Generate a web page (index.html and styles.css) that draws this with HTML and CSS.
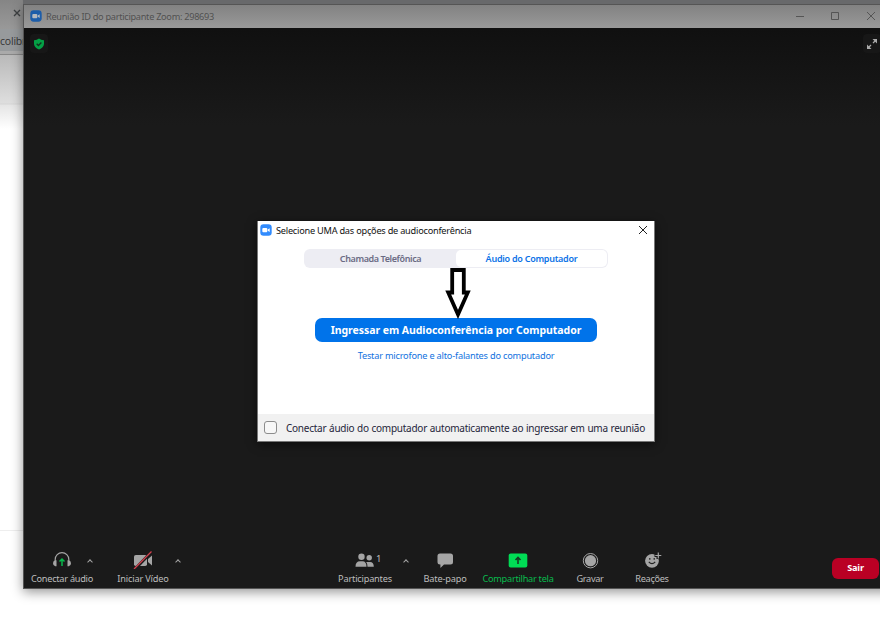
FILE: index.html
```html
<!DOCTYPE html>
<html lang="pt-BR">
<head>
<meta charset="utf-8">
<title>Zoom</title>
<link rel="stylesheet" href="styles.css">
</head>
<body>
<div class="browser">
  <div class="browser-tab"><svg width="8" height="8" viewBox="0 0 8 8"><path d="M1 1l6 6M7 1L1 7" stroke="#3d4042" stroke-width="1.4"/></svg></div>
  <div class="browser-url"><span>colibri</span></div>
  <div class="browser-page"></div>
  <div class="browser-foot"></div>
</div>
<main class="window">
  <header class="titlebar">
    <svg class="logo" width="12" height="12" viewBox="0 0 12 12"><rect x=".3" y=".3" width="11.4" height="11.4" rx="3.4" fill="#1d5da9"/><rect x="2.3" y="4" width="5" height="4.2" rx="1" fill="#b5b9bf"/><path d="M7.7 5.5l2-1.3v3.8l-2-1.3z" fill="#b5b9bf"/></svg>
    <h1><span class="t-title">Reunião ID do participante Zoom: 298693</span></h1>
    <svg class="controls" width="82" height="12" viewBox="0 0 82 12" fill="none" stroke="#555" stroke-width="1"><path d="M2 6.5h8M37.5 2.5h7v7h-7zM73 2l8 8M81 2l-8 8"/></svg>
  </header>
  <section class="stage">
    <div class="chip shield"><svg width="12" height="12" viewBox="0 0 12 12"><path d="M6 .5Q8 2 11 2.2V6Q10.600 9.500 6 11.500Q1.400 9.500 1 6V2.200Q4 2 6 .5z" fill="#04a045"/><path d="M3.700 5.800l1.700 1.700 3-3" fill="none" stroke="#12331f" stroke-width="1.300"/></svg></div>
    <div class="chip expand"><svg width="12" height="12" viewBox="0 0 12 12"><path d="M7 5l3-3M5 7l-3 3" stroke="#aaa" stroke-width="1.300"/><path d="M6.500 1H11v4.500zM1 6.500V11h4.500z" fill="#aaa"/></svg></div>
  </section>
  <footer class="toolbar">
    <div class="tool audio">
      <svg width="20" height="18" viewBox="0 0 20 18"><path d="M3.200 10V8.500a6.800 6.800 0 0 1 13.600 0V10" fill="none" stroke="#a5a5a5" stroke-width="1.200"/><path d="M4.500 9.300v6H3.300Q1 15 1 12.300T3.300 9.300zM15.500 9.300v6h1.200Q19 15 19 12.300T16.700 9.300z" fill="#a5a5a5"/><path d="M10 15V8.500M7.500 10.500L10 8l2.500 2.500" fill="none" stroke="#08b84c" stroke-width="1.500"/></svg>
      <span class="t-audio">Conectar áudio</span><i class="caret"></i>
    </div>
    <div class="tool video">
      <svg width="20" height="18" viewBox="0 0 20 18"><rect x="1" y="4" width="13" height="11" rx="1.800" fill="#a5a5a5"/><path d="M15 8l4-3.500v10L15 11z" fill="#a5a5a5"/><path d="M1.500 18.500L18.500 1" stroke="#1a1a1a" stroke-width="3"/><path d="M1 18L18.500 0.500" stroke="#d2404e" stroke-width="1.300"/></svg>
      <span class="t-video">Iniciar Vídeo</span><i class="caret"></i>
    </div>
    <div class="tool people">
      <svg width="20" height="18" viewBox="0 0 20 18" fill="#a5a5a5"><circle cx="6.500" cy="5.700" r="3.200"/><circle cx="14.200" cy="6.700" r="2.700"/><path d="M.5 15.800Q.5 10.300 5 10.300h2.500Q11.500 10.300 11.500 15.800zM12.500 15.800Q12.500 12.500 11.200 11h3.800Q18.800 11 18.800 15.800z"/></svg>
      <span class="t-people">Participantes</span><b class="count">1</b><i class="caret"></i>
    </div>
    <div class="tool chat">
      <svg width="20" height="18" viewBox="0 0 20 18"><path d="M5 2.500h10.500a2.500 2.500 0 0 1 2.500 2.500v6a2.500 2.500 0 0 1-2.500 2.500H9L5.400 17v-3.500H5A2.500 2.500 0 0 1 2.500 11V5A2.500 2.500 0 0 1 5 2.500z" fill="#a5a5a5"/></svg>
      <span class="t-chat">Bate-papo</span>
    </div>
    <div class="tool share">
      <svg width="20" height="18" viewBox="0 0 20 18"><rect x=".7" y="2.500" width="18.600" height="14" rx="2" fill="#00dc55"/><path d="M10 13V7M7.500 9L10 6.500 12.500 9" fill="none" stroke="#173b25" stroke-width="1.600"/></svg>
      <span class="t-share">Compartilhar tela</span>
    </div>
    <div class="tool record">
      <svg width="20" height="18" viewBox="0 0 20 18"><circle cx="10.500" cy="9.700" r="7.200" fill="none" stroke="#a5a5a5"/><circle cx="10.500" cy="9.700" r="5.600" fill="#a5a5a5"/></svg>
      <span class="t-record">Gravar</span>
    </div>
    <div class="tool react">
      <svg width="20" height="18" viewBox="0 0 20 18"><circle cx="10" cy="9.800" r="6.900" fill="#a5a5a5"/><path d="M16 1v7M12.500 4.500h7" stroke="#1a1a1a" stroke-width="3"/><path d="M16.300 1.500v6M13.300 4.500h6" stroke="#a5a5a5" stroke-width="1.200"/><path d="M7.800 7v1.800M12.200 7v1.800M6.800 10.800q3.200 3.800 6.400 0" fill="none" stroke="#222" stroke-width="1.200"/></svg>
      <span class="t-react">Reações</span>
    </div>
    <button class="leave"><span class="t-leave">Sair</span></button>
  </footer>
</main>
<div class="dialog">
  <header class="dialog-head">
    <svg width="12" height="12" viewBox="0 0 12 12"><rect x=".3" y=".3" width="11.400" height="11.400" rx="3.200" fill="#318bfd"/><rect x="2.300" y="4" width="5" height="4.200" rx="1" fill="#fff"/><path d="M7.700 5.500l2-1.300v3.800l-2-1.300z" fill="#fff"/></svg>
    <h2><span class="t-head">Selecione UMA das opções de audioconferência</span></h2>
    <svg class="close" width="10" height="10" viewBox="0 0 10 10"><path d="M1 1l8 8M9 1L1 9" stroke="#222"/></svg>
  </header>
  <nav class="tabs">
    <div class="tab"><span class="t-phone">Chamada Telefônica</span></div>
    <div class="tab active"><span class="t-comp">Áudio do Computador</span></div>
  </nav>
  <button class="join"><span class="t-join">Ingressar em Audioconferência por Computador</span></button>
  <a class="test"><span class="t-test">Testar microfone e alto-falantes do computador</span></a>
  <footer class="dialog-foot"><i class="check"></i><span class="t-auto">Conectar áudio do computador automaticamente ao ingressar em uma reunião</span></footer>
  <svg class="arrow" width="26" height="52" viewBox="0 0 26 52"><path d="M7.200 3h11.600v22.500h4L13 47.500 3.200 25.500h4z" fill="#fff" stroke="#000" stroke-width="3.800"/></svg>
</div>
</body>
</html>
```

FILE: styles.css
```css
* { box-sizing: border-box; }
body { margin: 0; width: 880px; height: 622px; overflow: hidden; position: relative; background: #fff; font-family: "Noto Sans", "Open Sans", sans-serif; font-size: 9.2px; }
h1, h2 { margin: 0; font-size: inherit; font-weight: 400; }
span { white-space: nowrap; }
svg { display: block; flex: none; }
.browser { display: flex; flex-direction: column; height: 622px; background: linear-gradient(#68696b 0, #6e6f71 4px, #fff 4px); }
.browser-tab { height: 29px; width: 30px; padding: 9px 0 0 13px; border-radius: 0 8px 0 0; background: linear-gradient(#858585, #999); }
.browser-url { height: 26px; padding-top: 4px; font: 10.500px/16px "Open Sans", sans-serif; letter-spacing: -.2px; color: #353535; background: linear-gradient(#979a9c 0 22px, #aaa 22px 25px, #888 25px); }
.browser-page { height: 476px; background: linear-gradient(#b9b9b9, #dedede 48px, #d5d5d5 49px, #e5e5e5 50px, #fff 74px); border-bottom: 1px solid #eee; }
.browser-foot { flex: 1; }
.window { position: absolute; left: 23px; top: 4px; width: 870px; height: 584.500px; display: flex; flex-direction: column; background: linear-gradient(#101010 24px, #1a1a1a 120px); border: 1px solid #555; border-bottom-color: #555; box-shadow: 0 3px 11px rgba(0,0,0,.42); }
.window::before { content: ""; position: absolute; left: -1px; top: -5px; width: 870px; height: 4px; background: #68696b; }
.titlebar { height: 23px; flex: none; display: flex; align-items: center; padding: 0 17px 1px 6px; background: linear-gradient(#828282, #999); color: #515151; }
.titlebar h1 { margin-left: 4px; flex: 1; }
.controls { margin-right: -1px; }
.stage { flex: 1; display: flex; justify-content: space-between; padding: 6px 12px 0 6px; }
.chip { width: 18px; height: 19px; border-radius: 4px; background: #171717; display: flex; align-items: center; justify-content: center; }
.expand { margin-right: -1px; }
.toolbar { height: 41px; display: flex; color: #bdbdbd; padding-left: 2px; position: relative; }
.tool { position: relative; width: 72px; display: flex; flex-direction: column; align-items: center; line-height: 14px; padding-top: 4px; }
.tool span { margin-top: 3px; }
.video { margin-left: 9px; }
.people { margin-left: 150px; }
.chat { margin-left: 8px; }
.share { margin-left: 1px; color: #08ba4d; }
.record { margin-left: 1px; width: 70px; }
.react { width: 54px; }
.caret { position: absolute; left: 62px; top: 13px; width: 4px; height: 4px; border: solid #a5a5a5; border-width: 1px 0 0 1px; transform: rotate(45deg); }
.video .caret { left: 69px; }
.people .caret { left: 75px; }
.count { position: absolute; left: 47px; top: 5px; font-weight: 400; font-size: 9.500px; }
.leave { margin: 11px 0 0 153px; width: 47px; height: 21px; border: 0; border-radius: 6px; background: #ba0024; color: #fff; font: 700 9.200px "Noto Sans", sans-serif; padding: 0 0 1px; }
.dialog { position: absolute; left: 257px; top: 221px; width: 398px; height: 221px; background: #fff; border: 1px solid #777; border-width: 0 1px 1px; box-shadow: 0 2px 9px rgba(0,0,0,.55); display: flex; flex-direction: column; align-items: center; }
.dialog-head { width: 100%; height: 18px; display: flex; align-items: center; padding: 0 6px 0 2px; color: #111; }
.dialog-head h2 { flex: 1; margin-left: 4px; }
.tabs { margin-top: 10px; width: 304px; height: 19px; border-radius: 6px; background: #ededf3; display: flex; padding: 1px; }
.tab { width: 151px; text-align: center; line-height: 17px; font-size: 9px; font-weight: 600; color: #6b6b84; }
.active { background: #fff; border-radius: 5px; color: #0b72e7; }
.join { margin-top: 50px; width: 282px; height: 24px; border: 0; border-radius: 7px; background: #0073ea; color: #fff; font: 700 10.500px "Noto Sans", sans-serif; padding: 0 0 1px; }
.test { margin-top: 7px; line-height: 14px; color: #1272e0; }
.dialog-foot { width: 100%; height: 27px; margin-top: auto; background: #f1f1f1; display: flex; align-items: center; padding-left: 6px; font-size: 10px; color: #25253a; }
.check { flex: none; width: 13px; height: 13px; border: 1px solid #8c8c8c; border-radius: 3px; margin-right: 9px; background: #f7f7f7; }
.arrow { position: absolute; left: 187px; top: 46px; }
.t-title { letter-spacing: -.29px; }
.t-head { letter-spacing: -.23px; }
.t-audio, .t-share { letter-spacing: -.27px; }
.t-video, .t-chat { letter-spacing: -.17px; }
.t-people, .t-leave, .t-test { letter-spacing: -.2px; }
.t-record, .t-react { letter-spacing: -.32px; }
.t-phone { letter-spacing: -.39px; }
.t-comp { letter-spacing: -.26px; }
.t-join { letter-spacing: -.05px; }
.t-auto { letter-spacing: -.25px; word-spacing: .35px; }
```
